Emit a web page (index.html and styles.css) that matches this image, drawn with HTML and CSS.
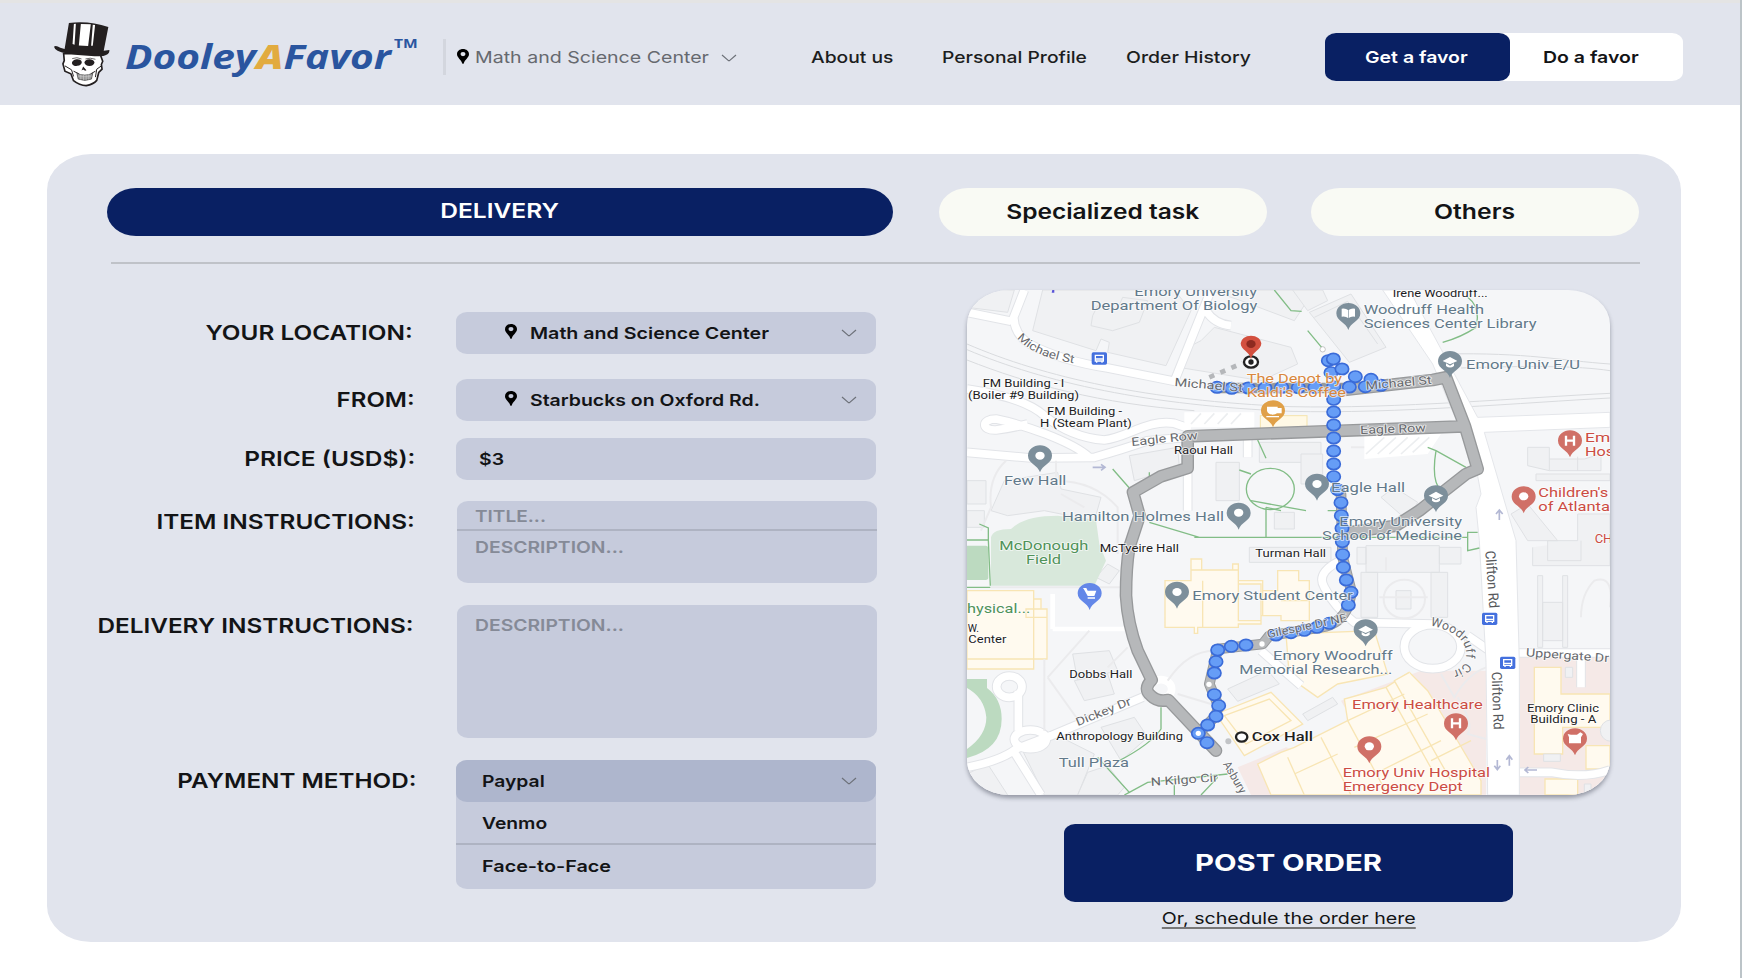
FILE: index.html
```html
<!DOCTYPE html>
<html lang="en">
<head>
<meta charset="utf-8">
<title>DooleyAFavor</title>
<link rel="stylesheet" href="styles.css">
</head>
<body>
<svg class="defs" width="0" height="0" aria-hidden="true">
  <symbol id="pin" viewBox="0 0 12 15" preserveAspectRatio="none"><path fill-rule="evenodd" d="M6 0C2.6 0 0 2.2 0 5.2C0 8.600 4.200 10.500 5.200 14.300Q6 15.600 6.800 14.300C7.800 10.500 12 8.600 12 5.200C12 2.200 9.400 0 6 0ZM6 3A2.500 2.100 0 1 1 6 7.200A2.500 2.100 0 1 1 6 3Z"/></symbol>
  <symbol id="chev" viewBox="0 0 16 8" preserveAspectRatio="none"><path d="M1 1L7.200 6.400Q8 7 8.800 6.400L15 1" fill="none" stroke="#6c7078" stroke-width="1.200"/></symbol>
</svg>
<div class="page">
  <header class="header">
    <svg class="skull" viewBox="160 62 175 200" preserveAspectRatio="none">
      <path d="M192 160L194 182L190 192L196 214L214 222L222 243Q240 258 260 258Q282 254 292 242L298 218L308 208L306 194L310 184L302 162Z" fill="#fff" stroke="#231f20" stroke-width="5"/>
      <path d="M208 68Q268 60 327 80L313 152L330 150Q332 164 312 168Q260 172 200 160Q166 154 163 140Q168 134 182 143L195 147Z" fill="#231f20"/>
      <path d="M244 71L274 72L266 138L238 136ZM223 71L229 70L225 134L219 132ZM280 73L287 74L280 137L275 137Z" fill="#fff"/>
      <ellipse cx="232" cy="188" rx="15" ry="10" fill="#231f20" transform="rotate(-8 232 188)"/>
      <ellipse cx="270" cy="188" rx="15" ry="10" fill="#231f20"/>
      <path d="M218 176Q232 170 246 177M258 177Q272 172 288 178" stroke="#231f20" stroke-width="2" fill="none"/>
      <path d="M251 200L246 212L251 209L257 213L261 211Z" fill="#231f20"/>
      <path d="M196 198L216 210L222 230M306 198L292 208L288 232M222 214L238 222M288 214L274 222" stroke="#231f20" stroke-width="3" fill="none"/>
      <path d="M232 220Q256 232 280 220L276 238Q256 246 236 238Z" fill="#9a9a9a" stroke="#333" stroke-width="2"/>
      <path d="M236 229H277M244 224V240M252 226V242M260 226V242M268 224V240" stroke="#ddd" stroke-width="1.500"/>
    </svg>
    <div class="brand"><span class="t">Dooley<b>A</b>Favor</span></div>
    <div class="tm"><span class="t">TM</span></div>
    <div class="place"><svg class="pin"><use href="#pin"/></svg><span class="t">Math and Science Center</span><svg class="chev"><use href="#chev"/></svg></div>
    <nav class="nav">
      <a class="about"><span class="t">About us</span></a>
      <a class="profile"><span class="t">Personal Profile</span></a>
      <a class="history"><span class="t">Order History</span></a>
    </nav>
    <div class="switch"><div class="on"><span class="t">Get a favor</span></div><div class="off"><span class="t">Do a favor</span></div></div>
  </header>
  <main class="card">
    <div class="tabs">
      <div class="tab active"><span class="t">DELIVERY</span></div>
      <div class="tab"><span class="t">Specialized task</span></div>
      <div class="tab others"><span class="t">Others</span></div>
    </div>
    <div class="cols">
      <form class="form">
        <div class="row loc"><label><span class="t">YOUR LOCATION:</span></label><div class="field sel"><svg class="pin"><use href="#pin"/></svg><span class="t">Math and Science Center</span><svg class="chev"><use href="#chev"/></svg></div></div>
        <div class="row from"><label><span class="t">FROM:</span></label><div class="field sel"><svg class="pin"><use href="#pin"/></svg><span class="t">Starbucks on Oxford Rd.</span><svg class="chev"><use href="#chev"/></svg></div></div>
        <div class="row price"><label><span class="t">PRICE (USD$):</span></label><div class="field val"><span class="t">$3</span></div></div>
        <div class="row item"><label><span class="t">ITEM INSTRUCTIONS:</span></label><div class="field box"><div class="title"><span class="t">TITLE...</span></div><div class="desc"><span class="t">DESCRIPTION...</span></div></div></div>
        <div class="row deliv"><label><span class="t">DELIVERY INSTRUCTIONS:</span></label><div class="field box"><div class="desc"><span class="t">DESCRIPTION...</span></div></div></div>
        <div class="row pay"><label><span class="t">PAYMENT METHOD:</span></label><div class="field menu"><div class="opt cur"><span class="t">Paypal</span><svg class="chev"><use href="#chev"/></svg></div><div class="opt"><span class="t">Venmo</span></div><div class="opt last"><span class="t">Face-to-Face</span></div></div></div>
      </form>
      <section class="side">
        <svg class="map" viewBox="18 28 1929 1515">
          <defs>
            <g id="mk"><path d="M0 0C-6 -22 -36 -26 -36 -50A36 31 0 0 1 36 -50C36 -26 6 -22 0 0Z"/></g>
            <ellipse id="d" rx="20" ry="17" fill="#669df6" stroke="#3a6bd8" stroke-width="5"/>
            <g id="bus"><rect x="-23" y="-18" width="46" height="37" rx="5" fill="#4470de"/><path d="M-12 -9H12V8H-12Z" fill="none" stroke="#fff" stroke-width="4"/><path d="M-12 2H12M-8 8V13M8 8V13" stroke="#fff" stroke-width="4"/></g>
            <g id="cap"><path d="M-22 -52L0 -64L22 -52L0 -42ZM-12 -45V-37Q0 -28 12 -37V-45L0 -38Z" fill="#fff"/></g>
            <path id="wc" d="M1408 1034Q1535 1062 1512 1145Q1500 1172 1440 1176"/>
            <path id="ms" d="M168 172Q220 232 352 250"/>
          </defs>
          <rect x="18" y="28" width="1929" height="1515" fill="#f5f6f8"/>
          <g class="bld">
            <path d="M245 28L215 150L405 210L420 175L445 185L440 215L615 255L690 90L640 28Z"/>
            <path d="M395 105L410 75L470 85L485 50L560 60L535 125L455 150L390 135Z"/>
            <path d="M18 60L100 28H160L140 95L18 80Z"/>
            <path d="M720 180L760 140L990 200L1010 250L900 300L665 262L680 200Z"/>
            <path d="M745 28L840 60L1000 120L1060 28Z"/>
            <path d="M1045 95L1170 40L1275 200L1165 245Z"/><path d="M1060 110L1160 62L1250 190"/>
            <path d="M995 28L1040 90L1100 60L1085 28Z"/>
            <path d="M505 525L650 500L655 560L520 600Z"/><path d="M765 545H835V660H765Z"/><path d="M895 485H1080V545H895Z"/>
            <path d="M130 600L290 575L300 625L420 650L400 720L250 690L140 705L90 690Z"/>
            <path d="M18 600H75V670H18ZM18 690H70V740H18Z"/>
            <path d="M1020 520H1085V610H1020ZM940 695H1000V745H940Z"/>
            <path d="M1260 650L1300 620L1370 665L1340 720Z"/>
            <path d="M1700 500H1765V535H1870L1920 520V570H1765L1700 555ZM1765 535V570M1850 528V570"/>
            <path d="M1725 580H1947V600H1725Z"/><path d="M1650 700L1700 670L1790 780H1700ZM1715 800V855H1947V700H1850V780H1760V840H1860V780"/>
            <path d="M405 890L440 850L475 870L445 910Z"/>
            <path d="M335 1120L445 1110L470 1170L350 1200Z"/><path d="M340 1200L440 1180L460 1240L370 1260Z"/>
            <path d="M18 1480L80 1450L140 1543H18Z"/><path d="M180 1400L280 1360L400 1420L350 1543H250Z"/><path d="M420 1340L520 1310L560 1370L480 1440Z"/><path d="M380 1475L440 1455L490 1520L470 1543H350Z"/>
            <path d="M800 1225L920 1170L955 1210L830 1262Z"/><path d="M865 800H1110V845H865Z"/>
            <path d="M1215 795H1435V875H1215ZM1435 800H1500V850H1435ZM1188 800H1215V850H1188ZM1200 875H1250V1010H1200ZM1410 875H1460V1010H1410ZM1305 930H1350V985H1305Z"/>
            <path d="M1730 885H1745V1100H1730ZM1805 885H1820V1100H1805ZM1745 965H1805V1080H1745Z"/>
            <path d="M1025 1300L1115 1250L1130 1270L1040 1320Z"/>
          </g>
          <g fill="#d8e8db"><path d="M90 915V770Q95 745 150 745Q190 705 290 705L405 718L415 790L435 840L400 915Z"/></g>
          <path d="M18 795H74Q82 795 82 805V890Q82 898 74 898H18Z" fill="#bcdac0"/>
          <path d="M18 1195H78V1222Q122 1255 122 1315Q122 1405 18 1432V1405Q76 1365 76 1310Q70 1250 18 1222Z" fill="#bcdac0"/>
          <g class="pink">
            <path d="M830 1460L975 1400L1100 1440L1120 1543H870Z"/><path d="M1140 1260L1380 1170H1575V1543H1300Z"/><path d="M1675 1130H1947V1543H1675Z"/>
          </g>
          <g class="cream">
            <path d="M18 930H218V1135H18ZM218 955H240V985H258V1135H218ZM195 985H258V1010H195ZM18 1135H218V1165H18Z"/>
            <path d="M612 900H690V835H722V868H815V850H832V900H905V930H950V870H1013V900H1045V1020H960V1005H900V1030H832V1040H710V1058H700V1040H612ZM725 900V1040M832 900V1020H900V910H832M690 868H832M905 930V1005M960 960H1045"/>
            <path d="M765 1300L930 1235L1025 1330L850 1425ZM790 1305L925 1255L990 1320L855 1390Z"/>
            <path d="M975 1060L1240 1050L1280 1180L1130 1210L1070 1250L985 1190Z"/>
            <path d="M890 1450L960 1415L1000 1400L1160 1320L1150 1255L1275 1220L1345 1175L1400 1230L1460 1330L1560 1500V1543H930Z"/>
            <path d="M1160 1320L1280 1543M1275 1220L1420 1480M1080 1370L1170 1543M1345 1175L1300 1200L1470 1500M1160 1320L1330 1240M1180 1400L1400 1300M1240 1480L1440 1380M980 1430L1030 1543M1410 1440L1530 1380M1000 1480L1130 1420"/>
            <path d="M1720 1160H1800V1240H1947V1340H1805V1420H1720ZM1875 1395H1947V1465H1875ZM1752 1495H1850V1543H1752Z"/>
          </g>
          <g class="bld"><path d="M1813 1160H1835V1190H1813ZM1748 1420H1798V1442H1748ZM1870 1510H1890V1543H1870Z"/><circle cx="1950" cy="1350" r="32"/></g>
          <g class="rail"><path d="M18 190C250 290 560 360 990 378C1300 385 1700 350 1947 338M18 207C250 305 560 375 990 392C1300 400 1700 365 1947 352M18 238C200 310 420 370 700 390M1450 220C1700 215 1800 240 1947 250M1500 262C1700 255 1850 255 1947 270"/></g>
          <g id="roads">
            <g class="edge">
              <path d="M190 28L158 110Q160 160 205 190Q300 240 440 262L640 302L750 28M18 95L150 122M735 90Q760 130 810 135"/>
              <path d="M18 325Q190 350 250 405Q330 470 430 478C500 470 560 415 640 428L690 445M385 530C330 480 180 430 105 415C60 415 60 450 105 448Q160 440 200 430M18 515L210 532L400 530Q490 505 560 480L700 468M680 560V690M860 450V530"/>
              <path d="M18 1460Q120 1440 165 1405L270 1365L545 1250M172 1350V1230M160 1415L240 1543"/>
              <path d="M1160 830Q1060 870 1090 920Q1120 980 1180 1025L1420 1030M1520 1065L1600 1120M1670 1117H1947M1860 1130V1220M1675 1475H1770Q1870 1495 1947 1468M900 1110L1020 1215"/>
              <ellipse cx="1415" cy="1098" rx="85" ry="66"/><ellipse cx="145" cy="1218" rx="38" ry="32"/><ellipse cx="208" cy="1376" rx="48" ry="28"/>
            </g>
            <g class="road">
              <path d="M190 28L158 110Q160 160 205 190Q300 240 440 262L640 302L750 28M18 95L150 122M735 90Q760 130 810 135"/>
              <path d="M18 325Q190 350 250 405Q330 470 430 478C500 470 560 415 640 428L690 445M385 530C330 480 180 430 105 415C60 415 60 450 105 448Q160 440 200 430M18 515L210 532L400 530Q490 505 560 480L700 468M680 560V690M860 450V530"/>
              <path d="M18 1460Q120 1440 165 1405L270 1365L545 1250M172 1350V1230M160 1415L240 1543"/>
              <path d="M1160 830Q1060 870 1090 920Q1120 980 1180 1025L1420 1030M1520 1065L1600 1120M1670 1117H1947M1860 1130V1220M1675 1475H1770Q1870 1495 1947 1468M900 1110L1020 1215"/>
              <ellipse cx="208" cy="1376" rx="48" ry="28"/><ellipse cx="145" cy="1218" rx="38" ry="32"/><ellipse cx="1415" cy="1098" rx="85" ry="66"/><ellipse cx="600" cy="1225" rx="32" ry="28"/>
            </g>
            <path d="M275 1045H490M275 940V1045" fill="none" stroke="#fff" stroke-width="14"/>
            <path d="M1265 28H1345L1550 410L1947 395V440L1570 455L1665 780L1675 1145V1543H1580L1575 1145L1555 780L1545 680L1560 640L1545 560L1415 250Z" fill="#fff" stroke="#e4e6ea" stroke-width="3"/>
            <g class="lane"><path d="M135 540Q80 590 90 680L60 750M285 540V600Q400 600 470 680V820M300 640L370 680M90 920H480M260 1190L360 1330M250 1135V1350M385 1050L260 1190M500 1100L440 1160M620 1200Q680 1110 760 1110M650 1240L750 1270M1275 830V870M1255 950H1400M1440 1180L1480 1250Q1520 1180 1575 1160M1490 1250Q1540 1330 1520 1360L1575 1375M1860 1010Q1860 940 1900 900Q1960 880 1947 980M1170 500H1400"/><ellipse cx="1330" cy="955" rx="62" ry="58"/></g>
            <path d="M1210 460H1440L1400 520L1210 535ZM670 395H880V440H670Z" fill="#fff"/>
          </g>
          <path d="M1215 520L1270 470M1250 520L1305 470M1285 520L1340 470M1320 520L1375 470M1355 515L1405 470M690 430L720 398M730 430L760 398M770 430L800 398M810 430L840 398" stroke="#eceef0" stroke-width="5"/>
          <g class="green">
            <path d="M455 565L505 622M565 575V590M565 725L715 770H990M915 680V770M835 568L870 580M890 478L915 533M990 770H1150M1100 690H1140M18 778H82L88 915M55 730L82 742V778M18 920H88M940 28L990 90L1022 92M1040 150L1090 210M700 770H1520V810L1555 802M1520 810V755H1550M1400 500L1425 510L1515 560M1425 510Q1410 600 1440 630M1520 50Q1560 80 1545 140Q1500 170 1445 185M600 1280V1345Q570 1390 475 1440M410 1430L505 1535L560 1505L800 1480M640 1510V1543M770 1490L720 1543M505 1535L490 1543"/>
            <ellipse cx="928" cy="625" rx="72" ry="62"/><path d="M870 660L1035 690M915 680L960 690"/>
          </g>
          <rect x="898" y="405" width="140" height="38" fill="#fff9e6" stroke="#f5e3ac" stroke-width="3"/>
          <g class="rt"><g class="out">
            <path d="M1150 328L1415 298L1455 290L1512 437L1550 565L1515 580L1375 690L1305 735L1165 755M1510 437L680 467V562L600 587L516 635L536 705L505 800Q495 860 495 945Q500 1030 530 1110L572 1198Q545 1225 570 1245Q590 1265 622 1258L765 1410"/>
            <path class="thin" d="M770 322H1150M1140 640L1145 830L1172 935L1162 975Q1140 1030 1080 1040L925 1065L905 1090L770 1105L745 1210L772 1275L765 1305L712 1358"/>
          </g><g class="in">
            <path d="M1150 328L1415 298L1455 290L1512 437L1550 565L1515 580L1375 690L1305 735L1165 755M1510 437L680 467V562L600 587L516 635L536 705L505 800Q495 860 495 945Q500 1030 530 1110L572 1198Q545 1225 570 1245Q590 1265 622 1258L765 1410"/>
            <path class="thin" d="M1140 640L1145 830L1172 935L1162 975Q1140 1030 1080 1040L925 1065L905 1090L770 1105L745 1210L772 1275L765 1305L712 1358"/>
          </g></g>
          <path d="M745 290L845 247" stroke="#b5b7ba" stroke-width="14" stroke-dasharray="16 20"/>
          <g>
            <use href="#d" x="768" y="320"/><use href="#d" x="812" y="323"/><use href="#d" x="862" y="322"/><use href="#d" x="912" y="322"/><use href="#d" x="962" y="320"/><use href="#d" x="1012" y="321"/><use href="#d" x="1062" y="320"/><use href="#d" x="1110" y="276"/><use href="#d" x="1143" y="265"/><use href="#d" x="1102" y="240"/><use href="#d" x="1117" y="235"/><use href="#d" x="1183" y="288"/><use href="#d" x="1230" y="296"/><use href="#d" x="1213" y="318"/><use href="#d" x="1260" y="314"/><use href="#d" x="1165" y="319"/><use href="#d" x="1118" y="318"/>
            <use href="#d" x="1118" y="356"/><use href="#d" x="1118" y="394"/><use href="#d" x="1118" y="433"/><use href="#d" x="1118" y="472"/><use href="#d" x="1118" y="511"/><use href="#d" x="1118" y="550"/><use href="#d" x="1118" y="588"/><use href="#d" x="1130" y="627"/><use href="#d" x="1140" y="666"/><use href="#d" x="1141" y="705"/><use href="#d" x="1143" y="743"/><use href="#d" x="1144" y="783"/><use href="#d" x="1145" y="822"/><use href="#d" x="1147" y="860"/><use href="#d" x="1156" y="898"/><use href="#d" x="1170" y="935"/><use href="#d" x="1162" y="973"/>
            <use href="#d" x="1105" y="1028"/><use href="#d" x="1068" y="1040"/><use href="#d" x="1030" y="1049"/><use href="#d" x="990" y="1056"/><use href="#d" x="945" y="1063"/><use href="#d" x="855" y="1093"/><use href="#d" x="811" y="1097"/><use href="#d" x="770" y="1108"/><use href="#d" x="765" y="1143"/><use href="#d" x="760" y="1177"/><use href="#d" x="760" y="1242"/><use href="#d" x="773" y="1275"/><use href="#d" x="765" y="1307"/><use href="#d" x="740" y="1333"/><use href="#d" x="712" y="1358"/><use href="#d" x="738" y="1386"/>
            <g fill="#fff"><circle cx="712" cy="1358" r="8"/><circle cx="744" cy="1211" r="8"/><circle cx="903" cy="1090" r="8"/><circle cx="1085" cy="206" r="8" stroke="#aaa" stroke-width="2"/></g>
          </g>
          <circle cx="802" cy="1382" r="9" fill="#c2c4c7"/>
          <ellipse cx="870" cy="244" rx="21" ry="17" fill="#fff" stroke="#222" stroke-width="7"/><circle cx="870" cy="244" r="8" fill="#222"/>
          <path d="M870 236C866 212 839 208 839 188A31 23 0 0 1 901 188C901 208 874 212 870 236Z" fill="#d3503f"/><ellipse cx="870" cy="190" rx="14" ry="12" fill="#8e2a20"/>
          <g fill="#7d8f9b"><use href="#mk" x="237" y="575"/><use href="#mk" x="833" y="747"/><use href="#mk" x="1162" y="148"/><use href="#mk" x="1467" y="292"/><use href="#mk" x="1068" y="660"/><use href="#mk" x="1425" y="695"/><use href="#mk" x="648" y="984"/><use href="#mk" x="1214" y="1097"/></g>
          <g fill="#d07067"><use href="#mk" x="1827" y="530"/><use href="#mk" x="1688" y="698"/><use href="#mk" x="1485" y="1379"/><use href="#mk" x="1842" y="1424"/><use href="#mk" x="1225" y="1448"/></g>
          <use href="#mk" x="386" y="988" fill="#6387e8"/><use href="#mk" x="936" y="440" fill="#e0a048"/>
          <g fill="#fff"><ellipse cx="237" cy="525" rx="14" ry="12"/><ellipse cx="833" cy="696" rx="14" ry="12"/><ellipse cx="1068" cy="610" rx="14" ry="12"/><ellipse cx="648" cy="934" rx="14" ry="12"/><ellipse cx="1688" cy="647" rx="14" ry="12"/><ellipse cx="1225" cy="1397" rx="14" ry="12"/>
            <path d="M1142 84Q1154 82 1161 88V112Q1154 106 1142 108ZM1182 84Q1170 82 1163 88V112Q1170 106 1182 108Z"/>
            <path d="M918 378H950V382H962V398H948Q944 402 934 402Q920 400 918 390ZM916 406H954V410H916Z"/>
            <path d="M366 922H376L380 930H406L400 946H380L370 928ZM380 950H402V954H380Z"/>
            <path d="M1820 1360L1830 1362H1848L1858 1355L1866 1360L1860 1370V1388H1824V1370Z"/></g>
          <path d="M1815 465V495M1839 465V495M1815 480H1839M1473 1313V1343M1497 1313V1343M1473 1328H1497" stroke="#fff" stroke-width="7"/>
          <use href="#cap" x="1467" y="293"/><use href="#cap" x="1425" y="697"/><use href="#cap" x="1214" y="1099"/>
          <use href="#bus" x="415" y="233"/><use href="#bus" x="1586" y="1014"/><use href="#bus" x="1640" y="1146"/>
          <path d="M274 28H280V36H272Z" fill="#5a55d8"/>
          <g fill="none" stroke="#b3b8d4" stroke-width="5"><path d="M1615 718V690M1605 700L1615 688L1625 700M1609 1438V1465M1600 1455L1609 1467L1618 1455M1645 1455V1427M1636 1437L1645 1425L1654 1437M1728 1468H1692M1702 1459L1692 1468L1702 1477M395 560H430M420 551L432 560L420 569"/></g>
          <ellipse cx="842" cy="1369" rx="17" ry="14" fill="#fff" stroke="#222" stroke-width="7"/>
          <g class="poi">
            <text x="520" y="46" textLength="368" lengthAdjust="spacingAndGlyphs">Emory University</text>
            <text x="389" y="88" textLength="500" lengthAdjust="spacingAndGlyphs">Department Of Biology</text>
            <text x="1208" y="101" textLength="361" lengthAdjust="spacingAndGlyphs">Woodruff Health</text>
            <text x="1208" y="143" textLength="519" lengthAdjust="spacingAndGlyphs">Sciences Center Library</text>
            <text x="1515" y="266" textLength="342" lengthAdjust="spacingAndGlyphs">Emory Univ E/U</text>
            <text x="129" y="614" textLength="187" lengthAdjust="spacingAndGlyphs">Few Hall</text>
            <text x="303" y="721" textLength="486" lengthAdjust="spacingAndGlyphs">Hamilton Holmes Hall</text>
            <text x="1110" y="635" textLength="222" lengthAdjust="spacingAndGlyphs">Eagle Hall</text>
            <text x="1135" y="737" textLength="368" lengthAdjust="spacingAndGlyphs">Emory University</text>
            <text x="1083" y="778" textLength="420" lengthAdjust="spacingAndGlyphs">School of Medicine</text>
            <text x="694" y="957" textLength="482" lengthAdjust="spacingAndGlyphs">Emory Student Center</text>
            <text x="936" y="1138" textLength="359" lengthAdjust="spacingAndGlyphs">Emory Woodruff</text>
            <text x="835" y="1179" textLength="459" lengthAdjust="spacingAndGlyphs">Memorial Research...</text>
            <text x="293" y="1460" textLength="211" lengthAdjust="spacingAndGlyphs">Tull Plaza</text>
          </g>
          <g class="poi org"><text x="857" y="308" textLength="286" lengthAdjust="spacingAndGlyphs">The Depot by</text><text x="857" y="348" textLength="298" lengthAdjust="spacingAndGlyphs">Kaldi's Coffee</text></g>
          <g class="poi grn"><text x="115" y="808" textLength="267" lengthAdjust="spacingAndGlyphs">McDonough</text><text x="195" y="849" textLength="105" lengthAdjust="spacingAndGlyphs">Field</text><text x="18" y="996" textLength="190" lengthAdjust="spacingAndGlyphs">hysical...</text></g>
          <g class="poi red">
            <text x="1872" y="484" textLength="148" lengthAdjust="spacingAndGlyphs">Emory</text><text x="1872" y="525" textLength="180" lengthAdjust="spacingAndGlyphs">Hospital</text>
            <text x="1732" y="650" textLength="210" lengthAdjust="spacingAndGlyphs">Children's</text><text x="1732" y="690" textLength="215" lengthAdjust="spacingAndGlyphs">of Atlanta</text><text x="1901" y="786">CH</text>
            <text x="1173" y="1286" textLength="392" lengthAdjust="spacingAndGlyphs">Emory Healthcare</text><text x="1145" y="1489" textLength="442" lengthAdjust="spacingAndGlyphs">Emory Univ Hospital</text><text x="1145" y="1531" textLength="360" lengthAdjust="spacingAndGlyphs">Emergency Dept</text>
          </g>
          <g class="blk">
            <text x="1295" y="48" textLength="285" lengthAdjust="spacingAndGlyphs">Irene Woodruff...</text>
            <text x="65" y="320" textLength="245" lengthAdjust="spacingAndGlyphs">FM Building - I</text><text x="21" y="356" textLength="333" lengthAdjust="spacingAndGlyphs">(Boiler #9 Building)</text>
            <text x="258" y="403" textLength="225" lengthAdjust="spacingAndGlyphs">FM Building -</text><text x="237" y="438" textLength="275" lengthAdjust="spacingAndGlyphs">H (Steam Plant)</text>
            <text x="639" y="521" textLength="177" lengthAdjust="spacingAndGlyphs">Raoul Hall</text><text x="416" y="815" textLength="238" lengthAdjust="spacingAndGlyphs">McTyeire Hall</text><text x="883" y="829" textLength="212" lengthAdjust="spacingAndGlyphs">Turman Hall</text>
            <text x="20" y="1055" textLength="34" lengthAdjust="spacingAndGlyphs">W.</text><text x="22" y="1087" textLength="114" lengthAdjust="spacingAndGlyphs">Center</text>
            <text x="325" y="1191" textLength="189" lengthAdjust="spacingAndGlyphs">Dobbs Hall</text><text x="286" y="1378" textLength="380" lengthAdjust="spacingAndGlyphs">Anthropology Building</text>
            <text x="1698" y="1294" textLength="216" lengthAdjust="spacingAndGlyphs">Emory Clinic</text><text x="1708" y="1327" textLength="198" lengthAdjust="spacingAndGlyphs">Building - A</text>
            <text class="cox" x="872" y="1380" textLength="184" lengthAdjust="spacingAndGlyphs">Cox Hall</text>
          </g>
          <g class="rd">
            <text textLength="190" lengthAdjust="spacingAndGlyphs"><textPath href="#ms">Michael St</textPath></text>
            <text x="640" y="316" textLength="205" lengthAdjust="spacingAndGlyphs" transform="rotate(5 640 316)">Michael St</text>
            <text x="1215" y="327" textLength="198" lengthAdjust="spacingAndGlyphs" transform="rotate(-5 1215 327)">Michael St</text>
            <text x="512" y="496" textLength="200" lengthAdjust="spacingAndGlyphs" transform="rotate(-6 512 496)">Eagle Row</text>
            <text x="1198" y="460" textLength="197" lengthAdjust="spacingAndGlyphs" transform="rotate(-2 1198 460)">Eagle Row</text>
            <text x="350" y="1337" textLength="176" lengthAdjust="spacingAndGlyphs" transform="rotate(-22 350 1337)">Dickey Dr</text>
            <text x="570" y="1516" textLength="202" lengthAdjust="spacingAndGlyphs" transform="rotate(-4 570 1516)">N Kilgo Cir</text>
            <text x="785" y="1450" textLength="105" lengthAdjust="spacingAndGlyphs" transform="rotate(60 785 1450)">Asbury</text>
            <text x="920" y="1073" textLength="245" lengthAdjust="spacingAndGlyphs" transform="rotate(-12 920 1073)">Gilespie Dr NE</text>
            <text class="wd"><textPath href="#wc">Woodruff Cir</textPath></text>
            <text x="1694" y="1127" textLength="250" lengthAdjust="spacingAndGlyphs" transform="rotate(4 1694 1127)">Uppergate Dr</text>
            <text class="big" x="1573" y="811" textLength="173" lengthAdjust="spacingAndGlyphs" transform="rotate(86 1573 811)">Clifton Rd</text>
            <text class="big" x="1592" y="1174" textLength="173" lengthAdjust="spacingAndGlyphs" transform="rotate(88 1592 1174)">Clifton Rd</text>
          </g>
        </svg>
        <button class="post" type="button"><span class="t">POST ORDER</span></button>
        <a class="later"><span class="t">Or, schedule the order here</span></a>
      </section>
    </div>
  </main>
</div>
</body>
</html>
```
FILE: styles.css
```css
* { box-sizing: border-box; }
body { margin: 0; background: #fff; font-family: Inter, "Liberation Sans", sans-serif; color: #131416; }
.defs { position: absolute; }
.page { width: 1742px; height: 978px; border-right: 2px solid #bcc4c8; overflow: hidden; }

/* wide lettering: each run is stretched horizontally by --k */
.t { --k: 1.18; display: inline-block; white-space: nowrap; transform-origin: left center; transform: scaleX(var(--k)); }

.header { height: 105px; border-top: 3px solid #e4e4e4; background: #e1e4ed; display: flex; position: relative; line-height: 20px; font-size: 16.500px; }
.skull { width: 58px; height: 66px; margin: 18px 0 0 53px; flex: none; }
.brand { width: 269px; margin: 33px 0 0 14px; font: italic 700 34px/40px "Open Sans", sans-serif; color: #2a559f; flex: none; }
.brand .t { --k: 1.196; }
.brand b { color: #e2ab3f; }
.tm { width: 49px; margin: 30px 0 0; font: 700 13px/20px "Open Sans", sans-serif; color: #2a559f; flex: none; }
.tm .t { --k: 1.2; }
.place { display: flex; width: 368px; height: 36px; margin-top: 36px; border-left: 3px solid #d3d6de; padding: 8px 0 0 11px; color: #66696f; flex: none; }
.place .t { --k: 1.186; margin-left: 6px; width: 0; }
.pin { width: 12px; height: 15px; margin-top: 2px; flex: none; }
.chev { width: 16px; height: 8px; flex: none; }
.place .chev { margin: 7px 0 0 246px; }
.nav { display: flex; margin-top: 44px; flex: none; font-weight: 500; color: #1c1d20; }
.nav .t { --k: 1.167; }
.about { width: 131px; }
.profile { width: 184px; }
.history { width: 199px; }
.history .t { --k: 1.176; }
.switch { display: flex; width: 358px; height: 48px; margin-top: 30px; background: #fff; border-radius: 11px / 9px; font-weight: 600; flex: none; }
.switch > div { padding-top: 14px; }
.on { width: 185px; background: #092063; color: #fff; border-radius: 11px / 9px; padding-left: 40px; }
.off { padding-left: 33px; }

.card { width: 1634px; height: 788px; margin: 49px 0 0 47px; background: #e1e4ed; border-radius: 44px / 36px; padding: 34px 41px 0 60px; }
.tabs { display: flex; height: 76px; border-bottom: 2px solid #bfc2c8; margin-left: 4px; font-weight: 600; font-size: 20.500px; line-height: 24px; }
.tab { width: 328px; height: 48px; margin-left: 44px; background: #f9faf4; border-radius: 29px / 24px; display: flex; justify-content: center; padding-top: 12px; }
.tab .t { --k: 1.196; }
.tab.others .t { --k: 1.207; }
.tab .t, .post .t { transform-origin: center; }
.tab.active { width: 786px; margin: 0 2px 0 -4px; background: #092063; color: #fff; padding-top: 11px; }
.cols { display: flex; }
.form { width: 860px; }
.row { display: flex; }
label { width: 308px; margin-right: 41px; padding-top: 9px; font-weight: 600; font-size: 20.500px; line-height: 24px; display: flex; justify-content: flex-end; flex: none; }
label .t { --k: 1.186; transform-origin: right center; }
.loc label .t, .deliv label .t { margin-right: 2px; }
.from label .t { --k: 1.171; }
.price label .t { --k: 1.193; }
.pay label .t { --k: 1.181; margin-right: -1px; }
.field { width: 420px; height: 42px; background: #c6cbdc; border-radius: 11px / 9px; font-weight: 600; font-size: 16.500px; line-height: 20px; flex: none; }
.loc { margin-top: 48px; }
.from { margin-top: 25px; }
.sel { display: flex; padding: 11px 0 0 49px; }
.sel .t { --k: 1.19; width: 0; margin-left: 13px; }
.from .sel .t { --k: 1.179; }
.sel .pin { margin-top: 1px; }
.sel .chev { margin: 6px 0 0 311px; }
.price { margin-top: 17px; }
.val { padding: 11px 0 0 23px; }
.item { margin-top: 21px; height: 82px; }
.box { height: 82px; margin-left: 1px; color: #858a97; }
.title { height: 30px; border-bottom: 2px solid #aeb3c2; padding: 5px 0 0 18px; }
.title .t { --k: 1.155; }
.desc { padding: 6px 0 0 18px; }
.desc .t { --k: 1.171; }
.deliv { margin-top: 22px; }
.deliv .box { height: 133px; }
.deliv .desc { padding-top: 10px; }
.pay { margin-top: 22px; }
.menu { height: 129px; }
.opt { height: 43px; padding: 11px 0 0 26px; border-bottom: 2px solid #aeb3c2; }
.opt .t { --k: 1.168; }
.opt.cur { height: 42px; display: flex; background: #aeb6cd; border: 0; border-radius: 11px / 9px; }
.cur .t { width: 0; }
.cur .chev { margin: 6px 0 0 359px; }
.opt.last { border: 0; }
.last .t { --k: 1.2; }

.side { width: 643px; margin-top: 26px; display: flex; flex-direction: column; align-items: center; }
.map { width: 643px; height: 505px; border-radius: 42px / 35px; box-shadow: 0 3px 4px rgba(60, 64, 80, .45); flex: none; }
.post { width: 449px; height: 78px; margin-top: 29px; border: 0; border-radius: 11px / 9px; background: #092063; color: #fff; font: 700 23px/28px Inter, sans-serif; flex: none; padding: 0; }
.post .t { --k: 1.272; }
.later { margin-top: 6px; font-size: 16.500px; line-height: 20px; }
.later .t { --k: 1.189; transform-origin: center; text-decoration: underline; text-decoration-thickness: 2px; text-underline-offset: 3px; text-decoration-color: #777; text-decoration-skip-ink: none; }

.bld path, .bld circle { fill: #f0f1f3; stroke: #dfe1e4; stroke-width: 3; }
.pink { fill: #f5e9e7; }
.cream path { fill: #fffaef; stroke: #f8e5b4; stroke-width: 4; }
.rail { fill: none; stroke: #d9dbde; stroke-width: 3; }
.edge { fill: none; stroke: #e2e4e8; stroke-width: 29; }
.road { fill: none; stroke: #fff; stroke-width: 23; }
.lane { fill: none; stroke: #ebebed; stroke-width: 6; }
.green { fill: none; stroke: #82bd86; stroke-width: 4; }
.rt { fill: none; stroke-linejoin: round; stroke-linecap: round; }
.out { stroke: #97999b; stroke-width: 38; }
.in { stroke: #b6b8ba; stroke-width: 30; }
.out .thin { stroke-width: 32; }
.in .thin { stroke-width: 26; }
.map text { font-family: Roboto, sans-serif; paint-order: stroke; stroke: rgba(255, 255, 255, .7); stroke-width: 5px; stroke-linejoin: round; }
.poi { font-size: 39px; fill: #62798a; }
.org { fill: #d9873c; }
.grn { fill: #4f9259; }
.red { fill: #cc4c43; }
.blk { font-size: 31px; fill: #1d1d1f; }
.cox { font-size: 37px; font-weight: 500; }
.rd { font-size: 35px; fill: #67696d; }
.wd { letter-spacing: 1px; font-size: 37px; }
.big { font-size: 42px; fill: #55575b; }
```
